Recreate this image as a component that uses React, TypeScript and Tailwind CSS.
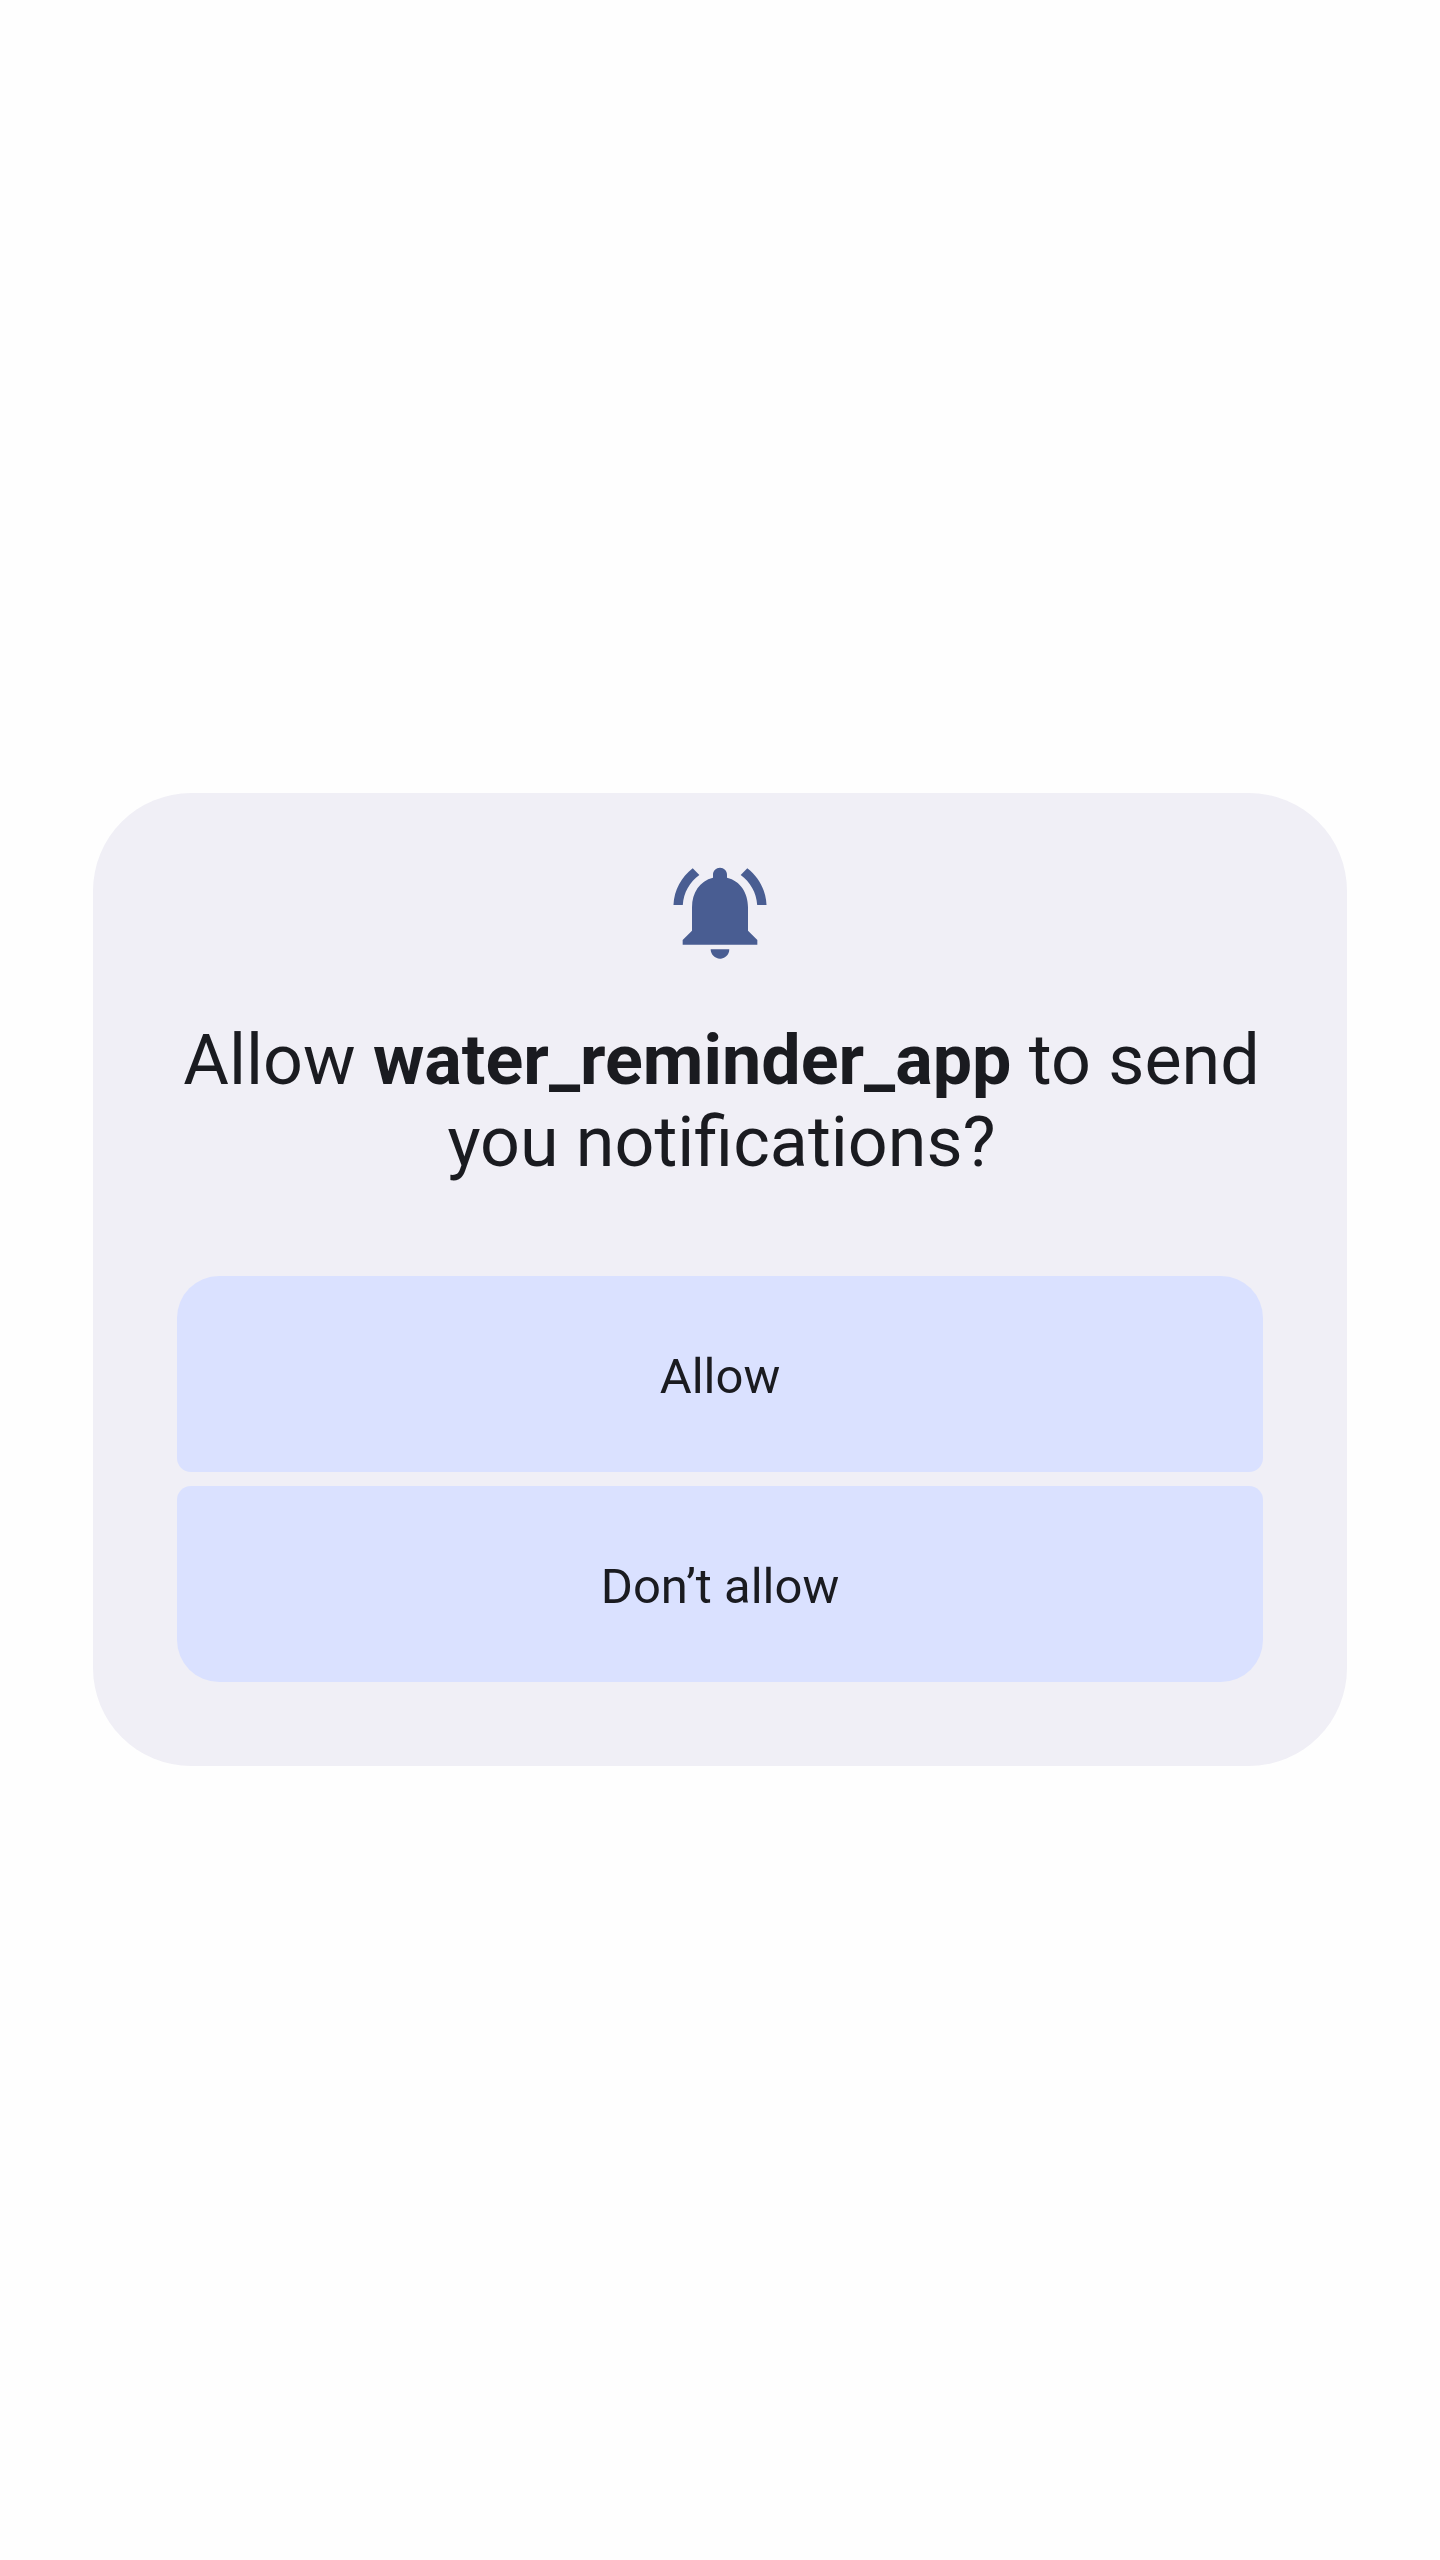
const App = () => {
  return (
    <div className="flex h-[2560px] w-full items-start justify-center bg-[#fefefe] pt-[793px] font-['Roboto',sans-serif]">
      <div className="flex h-[973px] w-[1254px] flex-col items-center rounded-[98px] bg-[#f0eff6] px-[84px] pt-[63px]">
        {/* bell */}
        <svg viewBox="0 0 24 24" className="size-[112px] fill-[#495d92]">
          <path d="M7.58 4.08L6.15 2.65C3.75 4.48 2.17 7.3 2.03 10.5h2c.15-2.65 1.51-4.97 3.55-6.42zm12.39 6.42h2c-.15-3.2-1.73-6.02-4.12-7.85l-1.42 1.43c2.02 1.45 3.39 3.77 3.54 6.42zM18 11c0-3.07-1.64-5.64-4.5-6.32V4c0-.83-.67-1.5-1.5-1.5s-1.5.67-1.5 1.5v.68C7.63 5.36 6 7.92 6 11v5l-2 2v1h16v-1l-2-2v-5zm-6 11c.14 0 .27-.01.4-.04.65-.14 1.18-.58 1.44-1.18.1-.24.15-.5.15-.78h-4c.01 1.1.9 2 2.01 2z" />
        </svg>

        <h1 className="mt-[51px] w-full pl-[3px] text-center text-[70px] leading-[82px] font-normal text-[#1a1b20]">
          Allow <span className="font-bold">water_reminder_app</span> to send you notifications?
        </h1>

        <div className="mt-[93px] flex w-full flex-col gap-[14px]">
          <button className="flex h-[196px] w-full items-center justify-center rounded-t-[42px] rounded-b-[14px] bg-[#dae1ff] pt-[6px] text-[49px] text-[#1a1b20]">
            Allow
          </button>
          <button className="flex h-[196px] w-full items-center justify-center rounded-t-[14px] rounded-b-[42px] bg-[#dae1ff] pt-[6px] text-[49px] text-[#1a1b20]">
            Don’t allow
          </button>
        </div>
      </div>
    </div>
  )
}

export default App
